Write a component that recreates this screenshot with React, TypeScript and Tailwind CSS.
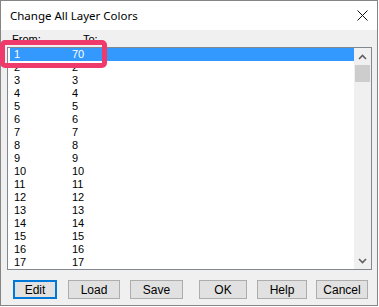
const rows = Array.from({ length: 17 }, (_, i) => ({
  from: String(i + 1),
  to: i === 0 ? "70" : String(i + 1),
}));

// label, left margin, width
const buttons: [string, string, string][] = [
  ["Edit", "ml-[12px]", "w-[44px]"],
  ["Load", "ml-[11px]", "w-[52px]"],
  ["Save", "ml-[10px]", "w-[53px]"],
  ["OK", "ml-[16px]", "w-[48px]"],
  ["Help", "ml-[10px]", "w-[50px]"],
  ["Cancel", "ml-[9px]", "w-[52px]"],
];

function Chevron({ down }: { down?: boolean }) {
  return (
    <svg width="9" height="6" viewBox="0 0 9 6" className="block">
      <path
        d={down ? "M1 1 L4.5 4.5 L8 1" : "M1 5 L4.5 1.5 L8 5"}
        fill="none"
        stroke="#606060"
        strokeWidth="1.6"
      />
    </svg>
  );
}

export default function App() {
  return (
    <div className="w-[379px] h-[307px] bg-white relative">
      <div className="w-[378px] h-[306px] border border-[#858585] flex flex-col">
        {/* Title bar */}
        <div className="h-[29px] bg-white flex items-center justify-between pl-[9px] pr-[9px] font-['Noto_Sans',sans-serif] text-[11.5px] text-black">
          <span>Change All Layer Colors</span>
          <svg width="11" height="11" viewBox="0 0 11 11">
            <path d="M0.5 0.5 L10.5 10.5 M10.5 0.5 L0.5 10.5" stroke="#111" strokeWidth="1" />
          </svg>
        </div>

        {/* Body */}
        <div className="flex-1 bg-[#f0f0f0] flex flex-col font-['Liberation_Sans',Arial,sans-serif] text-[11px] text-black">
          {/* Headers */}
          <div className="flex h-[17px] pt-[3px] pl-[11px] leading-[13px]">
            <span className="w-[71px]">From:</span>
            <span>To:</span>
          </div>

          {/* List */}
          <div className="ml-[6px] w-[365px] h-[223px] border border-[#828790] bg-white flex">
            <div className="flex-1 pl-[2px] overflow-hidden">
              {rows.map((r, i) => (
                <div
                  key={r.from}
                  className={
                    "flex h-[13px] leading-[13px] pl-[4px] " +
                    (i === 0 ? "bg-[#3399ff] text-white" : "text-black")
                  }
                >
                  <span className="w-[58px]">{r.from}</span>
                  <span>{r.to}</span>
                </div>
              ))}
            </div>
            {/* Scrollbar */}
            <div className="w-[17px] bg-[#f0f0f0] flex flex-col">
              <div className="h-[17px] flex items-center justify-center">
                <Chevron />
              </div>
              <div className="mx-[1px] h-[17px] bg-[#cdcdcd]" />
              <div className="flex-1" />
              <div className="h-[17px] flex items-center justify-center">
                <Chevron down />
              </div>
            </div>
          </div>

          {/* Buttons */}
          <div className="flex mt-[10px] font-['Liberation_Sans',Arial,sans-serif] text-[12px]">
            {buttons.map(([b, ml, w], i) => (
              <button
                key={b}
                className={
                  `${ml} ${w} h-[19px] bg-[#e1e1e1] flex items-center justify-center leading-none ` +
                  (i === 0 ? "border-2 border-[#0078d7]" : "border border-[#adadad]")
                }
              >
                {b}
              </button>
            ))}
          </div>
        </div>
      </div>

      {/* Annotation highlight */}
      <div className="absolute left-[0px] top-[40px] w-[107px] h-[28px] border-[5px] border-[#ef3a6c] rounded-[5px]" />
    </div>
  );
}
